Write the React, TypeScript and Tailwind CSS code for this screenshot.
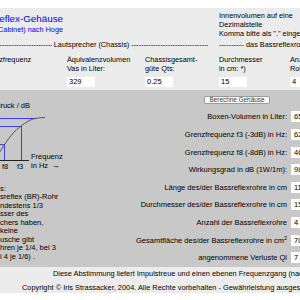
import React from "react";

const dashes = "-".repeat(120);

const Dashes = ({ className = "" }: { className?: string }) => (
  <span className={`overflow-hidden whitespace-nowrap ${className}`}>{dashes}</span>
);

const Field = ({ value, className = "" }: { value: string; className?: string }) => (
  <input
    readOnly
    value={value}
    className={`block h-[10px] bg-white px-[2px] text-[7.5px] leading-[10px] text-black outline-none ${className}`}
  />
);

const inputCols = [
  { head: ["Resonanzfrequenz", "fs in Hz:"], value: "45", width: "w-[97px]" },
  { head: ["Äquivalenzvolumen", "Vas in Liter:"], value: "329", width: "w-[78px]" },
  { head: ["Chassisgesamt-", "güte Qts:"], value: "0.25", width: "w-[74px]" },
  { head: ["Durchmesser", "in cm: *)"], value: "15", width: "w-[71px]" },
  { head: ["Anzahl der", "Rohre:"], value: "4", width: "w-[60px]" },
];

const results: { label: React.ReactNode; value: string }[] = [
  { label: "Boxen-Volumen in Liter:", value: "65.9" },
  { label: "Grenzfrequenz f3 (-3dB) in Hz:", value: "62.5" },
  { label: "Grenzfrequenz f8 (-8dB) in Hz:", value: "46.2" },
  { label: "Wirkungsgrad in dB (1W/1m):", value: "98.1" },
  { label: "Länge des/der Bassreflexrohre in cm", value: "11.3" },
  { label: "Durchmesser des/der Bassreflexrohre in cm", value: "15" },
  { label: "Anzahl der Bassreflexrohre", value: "4" },
  {
    label: (
      <>
        Gesamtfläche des/der Bassreflexrohre in cm<sup className="text-[5.5px]">2</sup>
      </>
    ),
    value: "70.7",
  },
  { label: "angenommene Verluste Ql", value: "7" },
];

const notes = [
  "s:",
  "sreflex (BR)-Rohr",
  "ndestens 1/3",
  "sser des",
  "chers haben,",
  "keine",
  "usche gibt",
  "hren je 1/4, bei 3",
  "i 4 je 1/6) .",
];

const Graph = () => (
  <div className="relative mt-[8px] h-[80px] text-[7.5px] leading-[9px]">
    <svg
      className="absolute left-[-10px] top-0 h-[80px] w-[70px]"
      viewBox="-10 0 70 80"
      fill="none"
    >
      <g stroke="#3b3bff" strokeWidth="1" shapeRendering="crispEdges">
        <path d="M-10 20.5H37" />
        <path d="M-10 28.5H21.5V62" />
        <path d="M-10 46.5H4.5V62" />
      </g>
      <path d="M-10 62.5H29" stroke="#222" strokeWidth="1" shapeRendering="crispEdges" />
      <path
        d="M-6 64C2 50 10 36 21 28S35 20 45 19.5"
        stroke="#555"
        strokeWidth="1"
      />
    </svg>
    <span className="absolute right-[35px] top-[2.5px] whitespace-nowrap">Schalldruck / dB</span>
    <span className="absolute left-[31px] top-[53.5px] whitespace-nowrap">Frequenz</span>
    <span className="absolute left-[31px] top-[62.5px] whitespace-pre">in Hz  →</span>
    <span className="absolute left-[2px] top-[64px]">f8</span>
    <span className="absolute left-[17px] top-[64px]">f3</span>
  </div>
);

export default function App() {
  return (
    <div className="h-[300px] w-[300px] overflow-hidden bg-white font-['Liberation_Sans',Arial,sans-serif] text-black">
      <div className="w-[360px]">
        {/* upper band: title and chassis inputs */}
        <div className="mt-[8px] bg-[#ebebeb] pb-[3px]">
          <div className="flex h-[31.5px]">
            <div className="flex w-[63px] shrink-0 flex-col items-end whitespace-nowrap pt-[4.5px] text-[#0000ff]">
              <div className="text-[9.8px] leading-[11px]">Bassreflex-Gehäuse</div>
              <div className="text-[7.3px] leading-[11px]">(Vented Box Cabinet) nach Hoge</div>
            </div>
            <div className="ml-[156px] whitespace-nowrap pt-[2.5px] text-[7.3px] leading-[9px]">
              <div>Innenvolumen auf eine</div>
              <div>Dezimalstelle</div>
              <div>Komma bitte als "." eingeben</div>
            </div>
          </div>

          <div className="flex h-[9px] text-[7.3px] leading-[9px]">
            <div className="ml-[-25px] flex w-[233px] shrink-0">
              <Dashes className="flex-1" />
              <span className="whitespace-pre"> Lautsprecher (Chassis) </span>
              <Dashes className="flex-1" />
            </div>
            <div className="ml-[11px] flex flex-1">
              <Dashes className="w-[25px] shrink-0" />
              <span className="whitespace-pre"> das Bassreflexrohr </span>
              <Dashes className="flex-1" />
            </div>
          </div>

          <div className="ml-[-30px] mt-[6px] flex text-[7.3px] leading-[9px]">
            {inputCols.map((c) => (
              <div key={c.value + c.head[0]} className={`${c.width} shrink-0`}>
                <div className="whitespace-nowrap">
                  {c.head[0]}
                  <br />
                  {c.head[1]}
                </div>
                <Field value={c.value} className="mt-[4.5px] w-[28px]" />
              </div>
            ))}
          </div>
        </div>

        {/* lower band: graph, notes and results */}
        <div className="flex h-[177px] bg-[#c8c8c8] text-[7.5px]">
          <div className="w-[65px] shrink-0">
            <Graph />
            <div className="mt-[6.75px] whitespace-nowrap leading-[8.5px]">
              {notes.map((n) => (
                <div key={n}>{n}</div>
              ))}
            </div>
          </div>

          <div className="flex flex-1 flex-col pr-[24px]">
            <button className="ml-[139px] mt-[6px] flex h-[8px] w-[66px] items-center justify-center rounded-[2px] border border-[#9a9a9a] bg-white text-[6.4px] leading-[6px] text-[#333]">
              Berechne Gehäuse
            </button>
            <div className="mt-[4.2px]">
              {results.map((r) => (
                <div key={r.value + String(r.label).length} className="flex h-[17.6px] items-center justify-end">
                  <span className="whitespace-nowrap">{r.label}</span>
                  <input
                    readOnly
                    value={r.value}
                    className="ml-[4px] h-[11px] w-[45px] bg-white pl-[3px] text-[7.5px] text-black outline-none"
                  />
                </div>
              ))}
            </div>
          </div>
        </div>

        {/* footer */}
        <div className="h-[26px] bg-[#ececec] text-[7.4px] leading-[14px]">
          <div className="whitespace-nowrap pl-[53px]">
            Diese Abstimmung liefert Impulstreue und einen ebenen Frequenzgang (nach Hoge).
          </div>
          <div className="whitespace-nowrap pl-[22px]">
            Copyright © Iris Strassacker, 2004. Alle Rechte vorbehalten - Gewährleistung ausgeschlossen.
          </div>
        </div>
      </div>
    </div>
  );
}
